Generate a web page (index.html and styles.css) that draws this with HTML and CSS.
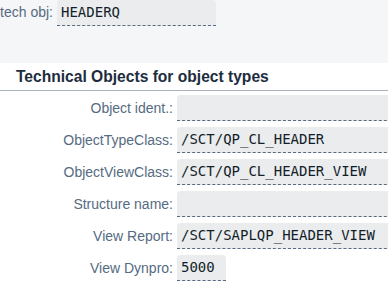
FILE: index.html
```html
<!DOCTYPE html>
<html lang="en">
<head>
  <meta charset="UTF-8" />
  <title>Technical Objects</title>
  <link rel="stylesheet" href="styles.css">
</head>
<body>
  <div class="top-bar">
    <div class="field-row">
      <span class="top-label">tech obj:</span>
      <span class="input top-input">HEADERQ</span>
    </div>
  </div>
  <div class="panel">
    <h2 class="panel-title">Technical Objects for object types</h2>
    <div class="form">
      <div class="form-row"><span class="label">Object ident.:</span><span class="input wide"></span></div>
      <div class="form-row"><span class="label">ObjectTypeClass:</span><span class="input wide">/SCT/QP_CL_HEADER</span></div>
      <div class="form-row"><span class="label">ObjectViewClass:</span><span class="input wide">/SCT/QP_CL_HEADER_VIEW</span></div>
      <div class="form-row"><span class="label">Structure name:</span><span class="input wide"></span></div>
      <div class="form-row"><span class="label">View Report:</span><span class="input wide">/SCT/SAPLQP_HEADER_VIEW</span></div>
      <div class="form-row"><span class="label">View Dynpro:</span><span class="input short">5000</span></div>
    </div>
  </div>
</body>
</html>
```

FILE: styles.css
```css
:root {
  --bg: #f5f6f7;
  --card: #fff;
  --label: #556b82;
  --title: #1d2d3e;
  --value: #131e29;
  --field: #eaecee;
  --line: #a9b4be;
}
html, body { margin: 0; padding: 0; }
body {
  font-family: 'Liberation Sans', Arial, sans-serif;
  background: var(--card);
  width: 388px;
  height: 282px;
  overflow: hidden;
}
.top-bar {
  background: var(--bg);
  height: 63px;
  box-sizing: border-box;
}
.field-row { display: flex; align-items: flex-start; gap: 4px; }
.top-label {
  width: 53px;
  text-align: right;
  color: var(--label);
  font-size: 14px;
  line-height: 25px;
  white-space: nowrap;
  flex-shrink: 0;
}
.input {
  display: block;
  box-sizing: border-box;
  height: 26px;
  background: var(--field);
  border-bottom: 1px dashed var(--label);
  border-radius: 4px 4px 0 0;
  font-family: 'DejaVu Sans Mono', 'Liberation Mono', monospace;
  font-size: 14px;
  color: var(--value);
  line-height: 25px;
  padding: 0 4px;
  white-space: nowrap;
  flex-shrink: 0;
}
.top-input { width: 159px; }
.panel-title {
  margin: 0;
  padding: 4px 0 0 16px;
  height: 28px;
  box-sizing: border-box;
  font-size: 15.6px;
  font-weight: 700;
  color: var(--title);
  line-height: 20px;
  border-bottom: 1px solid var(--line);
}
.form {
  display: flex;
  flex-direction: column;
  gap: 6px;
  padding-top: 4px;
}
.form-row { display: flex; align-items: center; gap: 4px; }
.label {
  width: 173px;
  text-align: right;
  color: var(--label);
  font-size: 14px;
  white-space: nowrap;
  flex-shrink: 0;
}
.wide { width: 230px; }
.short { width: 49px; }
```
